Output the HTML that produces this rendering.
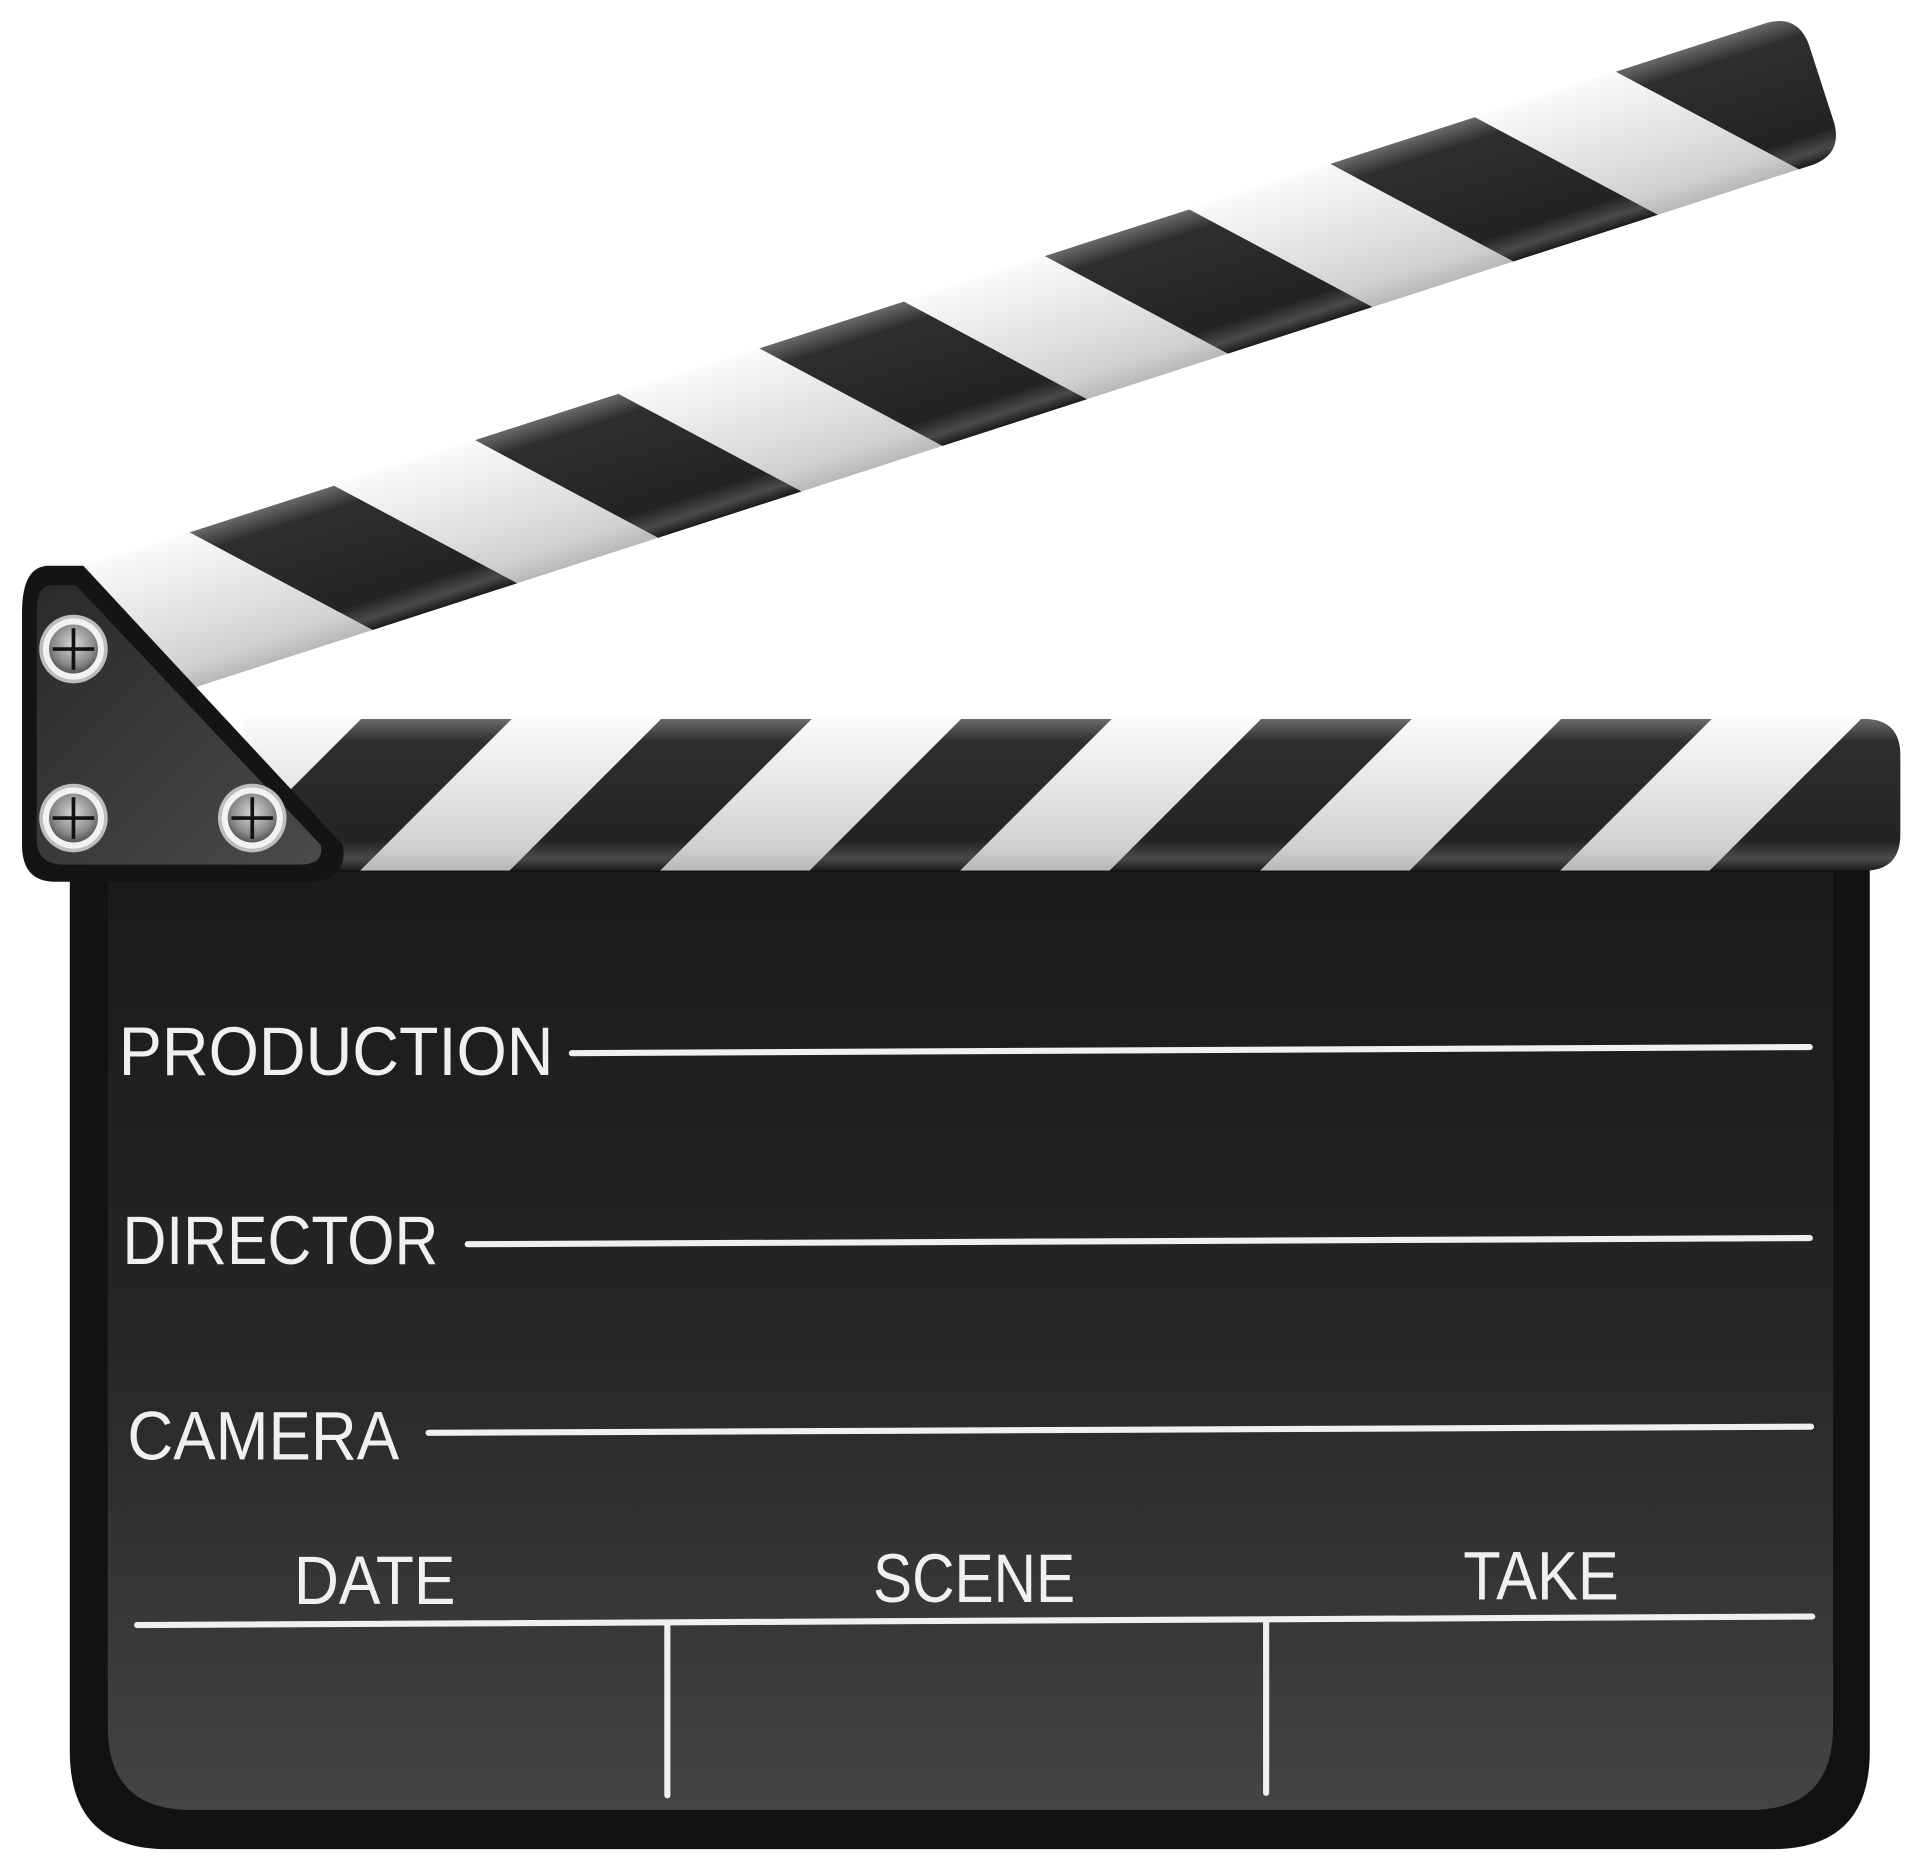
<!DOCTYPE html>
<html><head><meta charset="utf-8"><style>html,body{margin:0;padding:0;background:#fff;width:1920px;height:1870px;overflow:hidden}svg{display:block}</style></head>
<body>
<svg width="1920" height="1870" viewBox="0 0 1568 1527" preserveAspectRatio="none" xmlns="http://www.w3.org/2000/svg">
<defs>
<linearGradient id="board" x1="0" y1="0" x2="0" y2="1"><stop offset="0" stop-color="#1a1a1a"/><stop offset="0.5" stop-color="#262626"/><stop offset="1" stop-color="#444446"/></linearGradient>
<linearGradient id="dark" x1="0" y1="0" x2="0" y2="1"><stop offset="0" stop-color="#6a6a6c"/><stop offset="0.15" stop-color="#2e2e2e"/><stop offset="0.8" stop-color="#232323"/><stop offset="0.92" stop-color="#4a4a4c"/><stop offset="1" stop-color="#1a1a1a"/></linearGradient>
<linearGradient id="white" x1="0" y1="0" x2="0" y2="1"><stop offset="0" stop-color="#fafafa"/><stop offset="0.5" stop-color="#e2e3e5"/><stop offset="0.85" stop-color="#cfd0d2"/><stop offset="1" stop-color="#b8b8ba"/></linearGradient>
<linearGradient id="plate" x1="0" y1="0" x2="1" y2="1"><stop offset="0" stop-color="#2a2a2a"/><stop offset="1" stop-color="#4a4a4c"/></linearGradient>
<radialGradient id="screw" cx="0.5" cy="0.4" r="0.6"><stop offset="0" stop-color="#d8d8d8"/><stop offset="0.7" stop-color="#8a8a8a"/><stop offset="1" stop-color="#555"/></radialGradient>
<clipPath id="barclip"><path d="M200 587 H1522 Q1552 587 1552 617 V681 Q1552 711 1522 711 H200 Z"/></clipPath>
<clipPath id="stickclip"><path d="M0 0 H1440 Q1470 0 1470 30 V92 Q1470 122 1440 122 H0 Z"/></clipPath>
<g id="sc"><circle r="28" fill="#bdbdbd"/><circle r="25" fill="#f2f2f2"/><circle r="20" fill="url(#screw)"/><path d="M-17 0H17M0 -17V17" stroke="#111" stroke-width="3"/></g>
</defs>
<!-- board -->
<path d="M57 700 H1527 V1430 Q1527 1510 1447 1510 H137 Q57 1510 57 1430 Z" fill="#121212"/>
<path d="M88 712 H1497 V1410 Q1497 1478 1429 1478 H156 Q88 1478 88 1410 Z" fill="url(#board)"/>
<!-- stick -->
<g transform="translate(70 462) rotate(-17.9)">
<g clip-path="url(#stickclip)">
<rect x="-60" y="0" width="1540" height="122" fill="url(#white)"/>
<g fill="url(#dark)">
<path d="M89 0 H213 L331 122 H207 Z"/><path d="M334 0 H457 L575 122 H452 Z"/><path d="M578 0 H702 L820 122 H696 Z"/><path d="M823 0 H947 L1065 122 H941 Z"/><path d="M1068 0 H1192 L1310 122 H1186 Z"/><path d="M1313 0 H1480 V122 H1431 Z"/>
</g></g></g>
<!-- bottom bar -->
<g clip-path="url(#barclip)">
<rect x="190" y="587" width="1370" height="124" fill="url(#dark)"/>
<g fill="url(#white)">
<path d="M173 587 H295 L171 711 H49 Z"/><path d="M418 587 H540 L416 711 H294 Z"/><path d="M663 587 H785 L661 711 H539 Z"/><path d="M908 587 H1030 L906 711 H784 Z"/><path d="M1153 587 H1275 L1151 711 H1029 Z"/><path d="M1398 587 H1520 L1396 711 H1274 Z"/>
</g></g>
<!-- hinge plate -->
<path d="M40 462 H68 L280 690 Q285 720 250 720 H45 Q18 720 18 690 V500 Q18 462 40 462 Z" fill="#141414"/>
<path d="M42 478 H62 L262 690 Q265 706 245 706 H52 Q30 706 30 685 V500 Q30 478 42 478 Z" fill="url(#plate)"/>
<use href="#sc" x="60" y="530"/><use href="#sc" x="60" y="668"/><use href="#sc" x="206" y="668"/>
<!-- text -->
<g fill="#f0f0f0" font-family="Liberation Sans, sans-serif" font-size="56" lengthAdjust="spacingAndGlyphs">
<text x="97" y="878" textLength="355" lengthAdjust="spacingAndGlyphs">PRODUCTION</text>
<text x="100" y="1032" textLength="258" lengthAdjust="spacingAndGlyphs">DIRECTOR</text>
<text x="104" y="1192" textLength="222" lengthAdjust="spacingAndGlyphs">CAMERA</text>
<text x="240" y="1310" textLength="132" lengthAdjust="spacingAndGlyphs">DATE</text>
<text x="713" y="1308" textLength="165" lengthAdjust="spacingAndGlyphs">SCENE</text>
<text x="1195" y="1306" textLength="127" lengthAdjust="spacingAndGlyphs">TAKE</text>
</g>
<g stroke="#f0f0f0" stroke-width="5" stroke-linecap="round">
<line x1="467" y1="860" x2="1478" y2="855"/>
<line x1="382" y1="1016" x2="1478" y2="1011"/>
<line x1="350" y1="1170" x2="1479" y2="1165"/>
<line x1="112" y1="1327" x2="1480" y2="1320"/>
<line x1="545" y1="1328" x2="545" y2="1466"/>
<line x1="1034" y1="1325" x2="1034" y2="1464"/>
</g>
</svg>
</body></html>
